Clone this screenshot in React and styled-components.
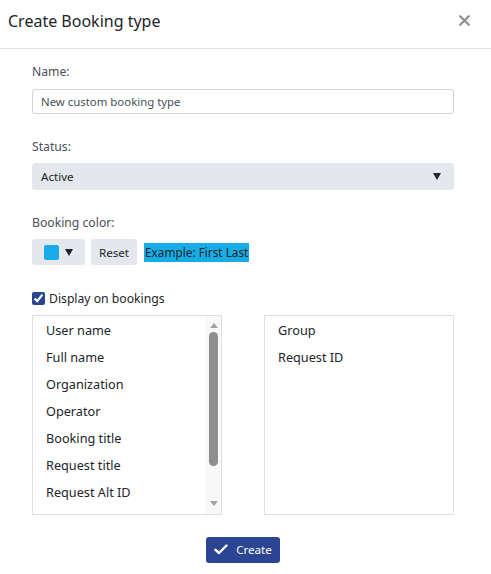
import React from "react";
import styled, { createGlobalStyle } from "styled-components";

const Global = createGlobalStyle`
  html, body { margin: 0; padding: 0; background: #fff; }
  body { font-family: "Segoe UI", "Noto Sans", "Open Sans", sans-serif; color: #212529; }
  * { box-sizing: border-box; }
`;

const Modal = styled.div`
  width: 491px;
  height: 574px;
  background: #fff;
  display: flex;
  flex-direction: column;
`;

const Header = styled.div`
  height: 49px;
  border-bottom: 1px solid #dee2e6;
  display: flex;
  align-items: center;
  justify-content: space-between;
  padding: 0 20px 6px 8px;
`;

const Title = styled.h1`
  margin: 0;
  font-size: 16px;
  font-weight: 400;
  color: #212529;
`;

const Close = styled.button`
  border: 0;
  background: none;
  padding: 0;
  width: 12px;
  height: 12px;
  display: flex;
  cursor: pointer;
`;

const Body = styled.div`
  padding: 13px 37px 0 32px;
  display: flex;
  flex-direction: column;
`;

const Label = styled.label`
  font-size: 12.2px;
  line-height: 20px;
  color: #495057;
  margin-top: ${(p) => (p.$first ? "0" : "23px")};
  margin-bottom: 6px;
`;

const Input = styled.input`
  height: 25px;
  margin-top: 1px;
  border: 1px solid #ced4da;
  border-radius: 3px;
  padding: 0 8px;
  font-family: inherit;
  font-size: 11.4px;
  color: #495057;
  outline: none;
`;

const Select = styled.div`
  height: 27px;
  background: #e4e7eb;
  border-radius: 3px;
  display: flex;
  align-items: center;
  justify-content: space-between;
  padding: 0 13px 0 9px;
  font-size: 11.6px;
  color: #212529;
`;

const Caret = styled.span`
  width: 0;
  height: 0;
  border-left: 4.5px solid transparent;
  border-right: 4.5px solid transparent;
  border-top: 7px solid #212529;
`;

const ColorRow = styled.div`
  display: flex;
  align-items: center;
  height: 26px;
`;

const GrayButton = styled.button`
  height: 26px;
  border: 0;
  border-radius: 3px;
  background: #e4e7eb;
  font-family: inherit;
  font-size: 11.6px;
  color: #212529;
  display: flex;
  align-items: center;
  gap: 6px;
  padding: 0;
  margin-right: ${(p) => p.$mr || 0}px;
  width: ${(p) => p.$w}px;
  justify-content: center;
`;

const Swatch = styled.span`
  width: 15px;
  height: 15px;
  border-radius: 2px;
  background: ${(p) => p.$color};
`;

const Example = styled.span`
  background: ${(p) => p.$color};
  font-size: 11.8px;
  line-height: 19px;
  padding: 0 1px;
  color: #212529;
`;

const CheckRow = styled.label`
  margin-top: 23px;
  height: 20px;
  display: flex;
  align-items: center;
  gap: 4px;
  font-size: 12.2px;
  color: #212529;
  input {
    margin: 0;
    width: 13px;
    height: 13px;
    accent-color: #2c4593;
  }
`;

const Lists = styled.div`
  margin-top: 7px;
  display: grid;
  grid-template-columns: 190px 190px;
  justify-content: space-between;
`;

const ListBox = styled.div`
  height: 200px;
  border: 1px solid #dcdfe3;
  display: flex;
  overflow: hidden;
`;

const Items = styled.ul`
  list-style: none;
  margin: 0;
  padding: 1px 0 0 13px;
  flex: 1;
  overflow: hidden;
`;

const Item = styled.li`
  height: 27px;
  line-height: 27px;
  font-size: 12.7px;
  color: #212529;
  white-space: nowrap;
`;

const ScrollBar = styled.div`
  width: 15px;
  background: #f8f8f8;
  display: flex;
  flex-direction: column;
  align-items: center;
  padding: 7px 0 8px;
`;

const Arrow = styled.span`
  width: 0;
  height: 0;
  border-left: 4px solid transparent;
  border-right: 4px solid transparent;
  ${(p) => (p.$up ? "border-bottom: 5px solid #a3a3a3;" : "border-top: 5px solid #a3a3a3;")}
`;

const Thumb = styled.span`
  width: 9px;
  height: 134px;
  margin-top: 4px;
  border-radius: 5px;
  background: #8e8e8e;
`;

const Track = styled.span`
  flex: 1;
`;

const Footer = styled.div`
  display: flex;
  justify-content: center;
  margin-top: 22px;
`;

const Primary = styled.button`
  height: 26px;
  width: 74px;
  border: 0;
  border-radius: 3px;
  background: #2c4593;
  color: #fff;
  font-family: inherit;
  font-size: 11.6px;
  display: flex;
  align-items: center;
  justify-content: center;
  gap: 8px;
  padding: 0 0 1px;
`;

const left = [
  "User name",
  "Full name",
  "Organization",
  "Operator",
  "Booking title",
  "Request title",
  "Request Alt ID",
  "Position",
];
const right = ["Group", "Request ID"];

export default function App() {
  return (
    <>
      <Global />
      <Modal>
        <Header>
          <Title>Create Booking type</Title>
          <Close aria-label="Close">
            <svg width="11" height="11" viewBox="0 0 11 11">
              <path d="M1.2 1.2 L9.8 9.8 M9.8 1.2 L1.2 9.8" stroke="#8f8f8f" strokeWidth="2.2" strokeLinecap="round" />
            </svg>
          </Close>
        </Header>
        <Body>
          <Label $first>Name:</Label>
          <Input defaultValue="New custom booking type" />
          <Label>Status:</Label>
          <Select>
            <span>Active</span>
            <Caret />
          </Select>
          <Label>Booking color:</Label>
          <ColorRow>
            <GrayButton $w={53} $mr={6}>
              <Swatch $color="#17ace8" />
              <Caret />
            </GrayButton>
            <GrayButton $w={46} $mr={7}>Reset</GrayButton>
            <Example $color="#17ace8">Example: First Last</Example>
          </ColorRow>
          <CheckRow>
            <input type="checkbox" defaultChecked />
            Display on bookings
          </CheckRow>
          <Lists>
            <ListBox>
              <Items>
                {left.map((t) => (
                  <Item key={t}>{t}</Item>
                ))}
              </Items>
              <ScrollBar>
                <Arrow $up />
                <Thumb />
                <Track />
                <Arrow />
              </ScrollBar>
            </ListBox>
            <ListBox>
              <Items>
                {right.map((t) => (
                  <Item key={t}>{t}</Item>
                ))}
              </Items>
            </ListBox>
          </Lists>
          <Footer>
            <Primary>
              <svg width="14" height="11" viewBox="0 0 14 11">
                <path d="M1.5 5.8 L5 9 L12.5 1.5" stroke="#fff" strokeWidth="2.4" fill="none" strokeLinecap="round" strokeLinejoin="round" />
              </svg>
              Create
            </Primary>
          </Footer>
        </Body>
      </Modal>
    </>
  );
}
